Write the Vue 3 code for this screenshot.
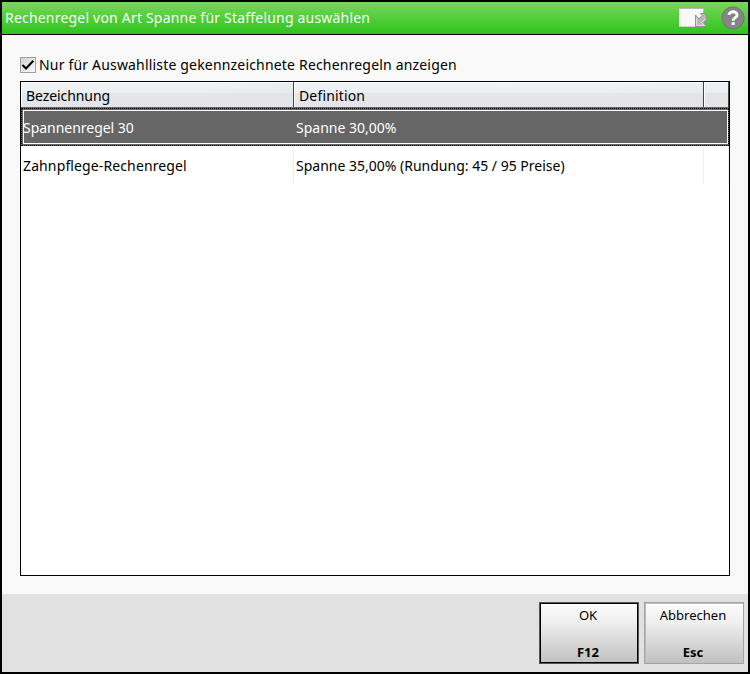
<script setup>
import { ref } from 'vue'

const onlyMarked = ref(true)
const selected = ref(0)
const rules = [
  { name: 'Spannenregel 30', definition: 'Spanne 30,00%' },
  { name: 'Zahnpflege-Rechenregel', definition: 'Spanne 35,00% (Rundung: 45 / 95 Preise)' },
]
</script>

<template>
  <div class="dialog">
    <header class="titlebar">
      <h1 class="title">Rechenregel von Art Spanne für Staffelung auswählen</h1>
      <svg class="window-icon" width="30" height="22" viewBox="0 0 30 22">
        <rect x="0" y="1" width="25" height="19" fill="#f8f8f8" />
        <path d="M0 1.5H25M24.5 1V7" stroke="#b5b5b5" fill="none" />
        <path d="M0 19.5H17" stroke="#c8d8c4" />
        <path d="M16.5 8L20 12L23.2 8.6L21.5 6.5H25.5Q28 8.5 28 12.5L24.4 16L28 19.5H16.5Z" fill="#b8b8b8" stroke="#8c8c8c" stroke-width=".9" />
        <path d="M17.6 10.5V18.4H25.4L22.4 15.8L26 12" fill="none" stroke="#e6e6e6" stroke-width=".9" />
      </svg>
      <svg class="help-icon" width="24" height="24" viewBox="0 0 24 24">
        <circle cx="12" cy="12" r="11.2" fill="#858585" stroke="#6c6c6c" stroke-width=".7" />
        <path d="M8 9C8 4.6 16.1 4.7 16.1 8.9C16.1 11.8 12.2 11.5 12.2 14.8" fill="none" stroke="#fff" stroke-width="2.8" />
        <rect x="10.7" y="16.3" width="3" height="2.8" fill="#fff" />
      </svg>
    </header>

    <main class="content">
      <label class="filter" @click="onlyMarked = !onlyMarked">
        <span class="checkbox">
          <svg v-if="onlyMarked" width="14" height="14" viewBox="0 0 14 14">
            <path d="M1.5 7L5 10.5L12.3 2.8" fill="none" stroke="#000" stroke-width="2.1" />
          </svg>
        </span>
        <span class="filter-text">Nur für Auswahlliste gekennzeichnete Rechenregeln anzeigen</span>
      </label>

      <section class="table">
        <div class="row head">
          <div class="th">Bezeichnung</div>
          <div class="th wide">Definition</div>
          <div class="th"></div>
        </div>
        <div
          v-for="(rule, i) in rules"
          :key="rule.name"
          class="row item"
          :class="{ selected: selected === i }"
          @click="selected = i"
        >
          <div class="td name">{{ rule.name }}</div>
          <div class="td">{{ rule.definition }}</div>
          <div class="td"></div>
        </div>
      </section>
    </main>

    <footer class="actions">
      <button class="btn primary"><span>OK</span><b>F12</b></button>
      <button class="btn"><span>Abbrechen</span><b>Esc</b></button>
    </footer>
  </div>
</template>

<style>
body { margin: 0; }
</style>

<style scoped>
* { box-sizing: border-box; }
.dialog {
  width: 750px;
  height: 674px;
  border: 2px solid #000;
  display: flex;
  flex-direction: column;
  background: #f9f9f9;
  color: #000;
  font: 14px/20px "Noto Sans", "Open Sans", sans-serif;
}
.titlebar {
  height: 33px;
  flex: none;
  display: flex;
  align-items: center;
  padding: 0 3px;
  border-bottom: 1px solid #000;
  background: linear-gradient(#77d75b, #2ec41b);
}
.title {
  flex: 1;
  margin: 0;
  font-size: 14px;
  font-weight: 400;
  letter-spacing: 0.2px;
  color: #f4fff0;
  white-space: nowrap;
}
.window-icon { margin-right: 12px; }
.content {
  flex: 1;
  padding: 20px 18px 18px;
  display: flex;
  flex-direction: column;
}
.filter {
  height: 20px;
  margin-bottom: 6px;
  display: flex;
  align-items: center;
  gap: 3px;
  white-space: nowrap;
}
.filter-text { letter-spacing: 0.18px; }
.checkbox {
  width: 16px;
  height: 16px;
  border: 1px solid #a0a0a0;
  background: linear-gradient(135deg, #d2d2d2, #fafafa);
  display: flex;
}
.table {
  flex: 1;
  border: 1px solid #000;
  background: #fff;
}
.row {
  display: grid;
  grid-template-columns: 273px 410px 25px;
  grid-template-rows: 100%;
}
.head { height: 25px; }
.th {
  padding: 4px 5px 0;
  border-right: 1px solid #444;
  line-height: 20px;
  letter-spacing: -0.08px;
  background:
    linear-gradient(90deg, transparent calc(100% - 90px), rgba(225, 225, 225, 0.35)),
    linear-gradient(#f3f4f5 0, #ebeff2 42%, #e4e6ea 46%, #e3e5e9 100%);
  box-shadow: inset 1px 1px #fff;
}
.th:last-child { background: linear-gradient(#ebeff2 42%, #e3e5e9 46%); }
.th.wide { letter-spacing: 0.15px; }
.item { height: 38px; }
.td {
  border-right: 1px solid #eee;
  padding: 0 2px;
  line-height: 40px;
  white-space: nowrap;
}
.td:last-child { border-right-color: #f6f6f6; }
.td.name { letter-spacing: 0.12px; }
.selected {
  position: relative;
  height: 39px;
  background: #666;
  color: #fff;
}
.selected .td,
.selected .td:last-child {
  border-color: transparent;
  line-height: 42px;
}
.selected .name { letter-spacing: -0.03px; }
/* focus rectangle: dotted outer line, white inner line */
.selected::before {
  content: "";
  position: absolute;
  inset: 1px 0 0;
  border: 1px dotted #000;
}
.selected::after {
  content: "";
  position: absolute;
  inset: 3px 1px 2px 2px;
  border: 1px solid #fff;
}
.actions {
  height: 78px;
  flex: none;
  display: flex;
  justify-content: flex-end;
  gap: 5px;
  padding: 8px 4px;
  background: #e1e1e1;
}
.btn {
  width: 100px;
  height: 62px;
  padding: 2px 2px 1px 0;
  display: flex;
  flex-direction: column;
  justify-content: space-between;
  align-items: center;
  border: 1px solid #a4a4a4;
  background: linear-gradient(#fdfdfd, #ededed 35%, #c0c0c0);
  box-shadow: inset 1px 1px #bbb;
  color: #000;
  font: 13px/20px "Noto Sans", "Open Sans", sans-serif;
}
.primary {
  border-color: #555;
  box-shadow: inset 0 0 0 1px #000;
}
</style>
